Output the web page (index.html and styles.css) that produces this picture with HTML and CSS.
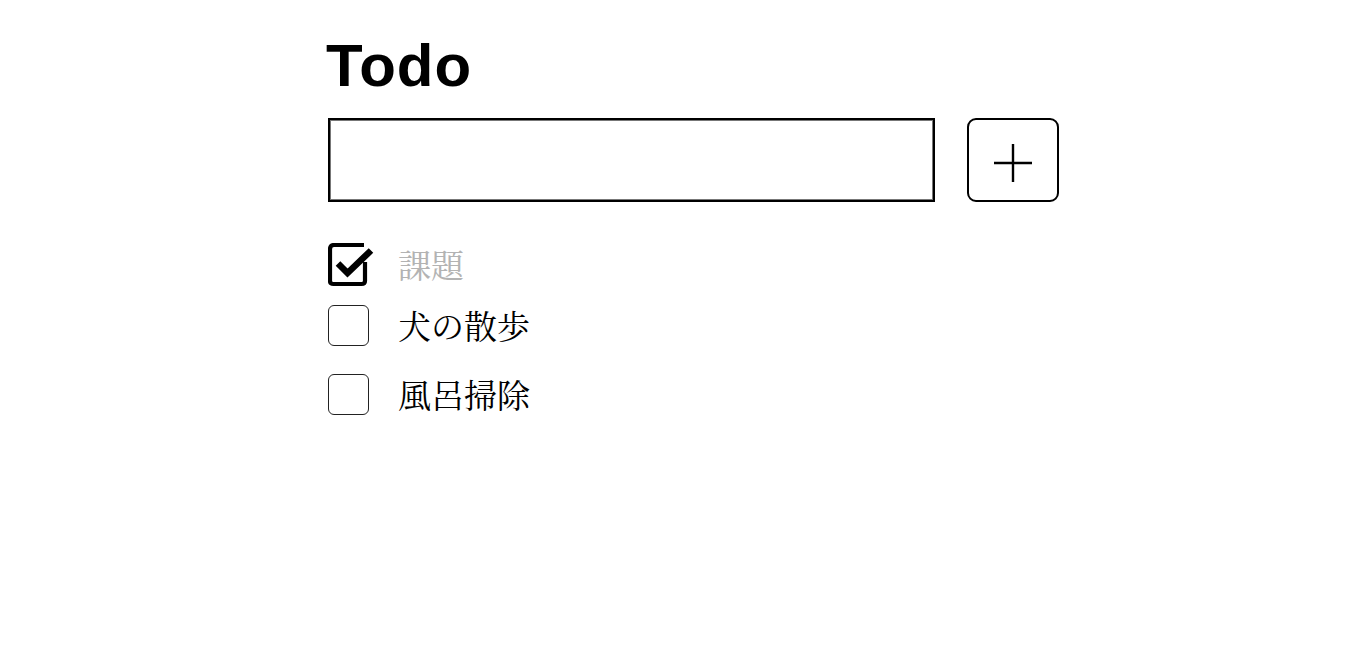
FILE: index.html
```html
<!DOCTYPE html>
<html lang="ja">
<head>
<meta charset="utf-8">
<title>Todo</title>
<link rel="stylesheet" href="styles.css">
</head>
<body>
<div class="app">
  <h1 class="title">Todo</h1>
  <form class="add-form">
    <input class="add-input" type="text">
    <button class="add-button" type="button" aria-label="追加">
      <svg class="plus" width="40" height="40" viewBox="0 0 40 40">
        <path d="M1 21 H39 M20 2 V40" stroke="#000" stroke-width="2.4" fill="none"/>
      </svg>
    </button>
  </form>
  <ul class="todo-list">
    <li class="todo-item done">
      <svg class="check-icon" width="46" height="44" viewBox="0 0 46 44">
        <path d="M36 2 H6 Q2 2 2 6 V38 Q2 41 5.5 41 H33.5 Q37 41 37 38 V19" stroke="#000" stroke-width="4.2" fill="none" stroke-linejoin="round"/>
        <path d="M10 20.5 L19.5 30 L43 7.5" stroke="#000" stroke-width="6.5" fill="none" stroke-linejoin="miter"/>
      </svg>
      <span class="todo-text">課題</span>
    </li>
    <li class="todo-item">
      <span class="box"></span>
      <span class="todo-text">犬の散歩</span>
    </li>
    <li class="todo-item third">
      <span class="box"></span>
      <span class="todo-text">風呂掃除</span>
    </li>
  </ul>
</div>
</body>
</html>
```
FILE: styles.css
```css
html, body {
  margin: 0;
  padding: 0;
  background: #fff;
}

.app {
  width: 731px;
  margin-left: 328px;
  padding-top: 36px;
}

.title {
  margin: 0;
  font-family: "Liberation Sans", Arial, sans-serif;
  font-weight: bold;
  font-size: 60px;
  line-height: 60px;
  letter-spacing: 1px;
  color: #000;
  margin-left: -2px;
}

.add-form {
  display: flex;
  gap: 32px;
  margin-top: 22px;
}

.add-input {
  box-sizing: border-box;
  width: 607px;
  height: 84px;
  margin: 0;
  border: 2px solid #000;
  box-shadow: inset 0 0 0 1px #777;
  border-radius: 0;
  background: #fff;
  font-size: 32px;
  padding: 0 10px;
  outline: none;
}

.add-button {
  box-sizing: border-box;
  width: 92px;
  height: 84px;
  margin: 0;
  padding: 0;
  border: 2px solid #000;
  border-radius: 9px;
  background: #fff;
  display: flex;
  align-items: center;
  justify-content: center;
}

.plus {
  display: block;
  margin-top: 3px;
  margin-left: -1px;
}

.todo-list {
  list-style: none;
  margin: 41px 0 0 0;
  padding: 0;
}

.todo-item {
  display: flex;
  align-items: center;
  height: 42px;
  gap: 28px;
  font-family: "Noto Serif CJK JP", "Liberation Serif", serif;
  font-size: 33px;
  color: #000;
}

.todo-item + .todo-item {
  margin-top: 19px;
}

.todo-item.third {
  margin-top: 27px;
}

.check-icon {
  display: block;
  flex: none;
  width: 46px;
  height: 44px;
  margin-right: -4px;
  margin-top: 1px;
}

.box {
  box-sizing: border-box;
  flex: none;
  width: 41px;
  height: 41px;
  border: 1.5px solid #222;
  border-radius: 6px;
  background: #fff;
  margin-right: 1px;
}

.done .todo-text {
  color: #b3b3b3;
}

.todo-text {
  line-height: 42px;
}
```
